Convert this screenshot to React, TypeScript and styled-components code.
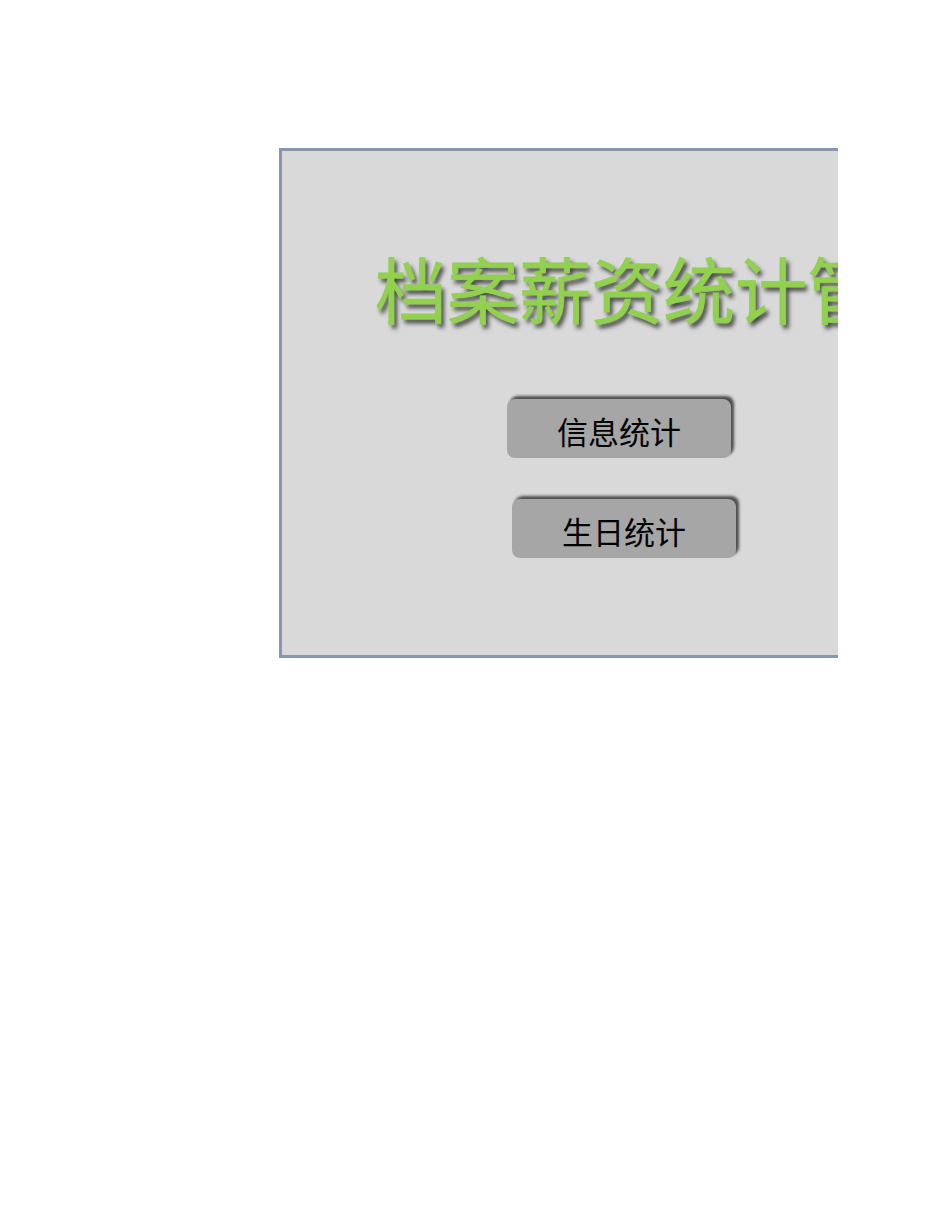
import styled, { createGlobalStyle } from "styled-components";

const GlobalStyle = createGlobalStyle`
  html, body {
    margin: 0;
    padding: 0;
    background: #ffffff;
  }
  body {
    font-family: "Noto Sans CJK SC", "Noto Sans", sans-serif;
  }
`;

const Page = styled.div`
  width: 950px;
  height: 1230px;
  padding-top: 148px;
  padding-left: 279px;
  box-sizing: border-box;
`;

const Panel = styled.section`
  width: 559px;
  height: 510px;
  box-sizing: border-box;
  background: #d9d9d9;
  border-top: 3px solid #8797b0;
  border-left: 3px solid #8797b0;
  border-bottom: 3px solid #8797b0;
  overflow: hidden;
  display: flex;
  flex-direction: column;
`;

const Title = styled.h1`
  margin: 100px 0 0 93px;
  font-size: 72px;
  line-height: 1;
  font-weight: 400;
  white-space: nowrap;
  color: #92d050;
  -webkit-text-stroke: 0.8px #92d050;
  text-shadow: 3px 4px 4px rgba(30, 30, 30, 0.8);
`;

const Buttons = styled.div`
  display: flex;
  flex-direction: column;
  align-items: flex-start;
  gap: 41px;
  margin-top: 76px;
`;

const Button = styled.button<{ $offset: number }>`
  margin-left: ${(p) => p.$offset}px;
  width: 224px;
  height: 59px;
  border: none;
  border-radius: 8px;
  background: #a6a6a6;
  box-shadow: 3px -3px 3px rgba(0, 0, 0, 0.65);
  font-family: "Noto Sans CJK SC", "Noto Sans", sans-serif;
  font-size: 31px;
  color: #000000;
  padding: 4px 0 0;
  display: flex;
  align-items: center;
  justify-content: center;
  cursor: pointer;
`;

export default function App() {
  return (
    <>
      <GlobalStyle />
      <Page>
        <Panel>
          <Title>档案薪资统计管理系统</Title>
          <Buttons>
            <Button $offset={225}>信息统计</Button>
            <Button $offset={230}>生日统计</Button>
          </Buttons>
        </Panel>
      </Page>
    </>
  );
}
